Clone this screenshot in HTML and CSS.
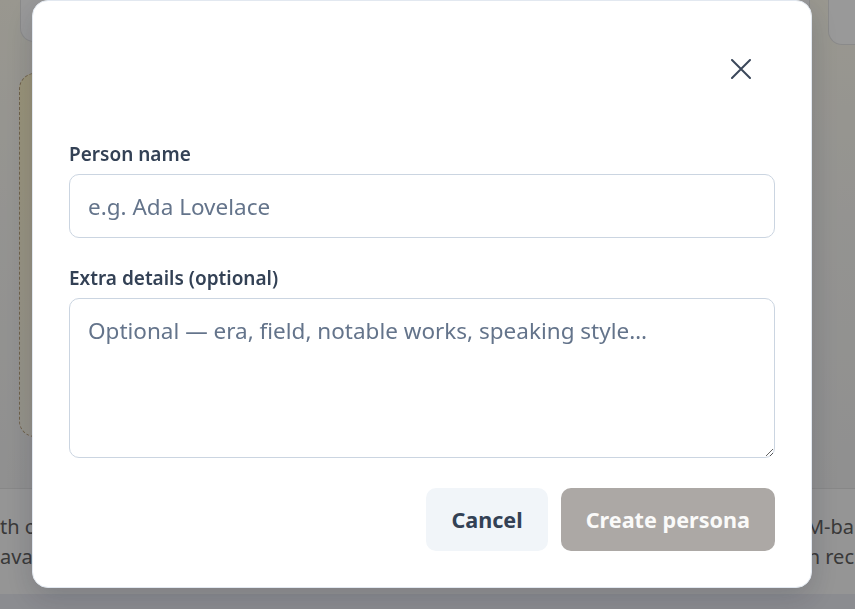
FILE: index.html
```html
<!DOCTYPE html>
<html lang="en">
<head>
<meta charset="utf-8">
<title>New persona</title>
<link rel="stylesheet" href="styles.css">
</head>
<body>
<div class="app">
  <div class="topbar">
    <div class="top-card top-card-left"></div>
    <div class="top-card top-card-right"></div>
  </div>
  <main class="main">
    <div class="drop-card"></div>
  </main>
  <footer class="footer">
    <p class="foot-text foot-left">th or<br>avai</p>
    <p class="foot-text foot-right">LLM-ba<br>own rec</p>
  </footer>
  <div class="bottom-band"></div>
</div>

<div class="overlay">
  <div class="modal" role="dialog" aria-label="Create persona">
    <div class="modal-head">
      <button class="close-btn" type="button" aria-label="Close">
        <svg width="20" height="20" viewBox="0 0 20 20" fill="none" stroke="currentColor" stroke-width="2" stroke-linecap="round"><path d="M1 1 L19 19 M19 1 L1 19"/></svg>
      </button>
    </div>
    <label class="field-label" for="pname">Person name</label>
    <input id="pname" class="field field-input" type="text" placeholder="e.g. Ada Lovelace">
    <label class="field-label" for="pdetails">Extra details (optional)</label>
    <textarea id="pdetails" class="field field-area" placeholder="Optional — era, field, notable works, speaking style…"></textarea>
    <div class="actions">
      <button class="btn btn-cancel" type="button">Cancel</button>
      <button class="btn btn-create" type="button" disabled>Create persona</button>
    </div>
  </div>
</div>
</body>
</html>
```

FILE: styles.css
```css
* { box-sizing: border-box; }

html, body {
  margin: 0;
  height: 609px;
  overflow: hidden;
}

body {
  font-family: "Noto Sans", "Open Sans", "Liberation Sans", sans-serif;
  background: #f8f8f8;
}

/* underlying page */
.app {
  height: 609px;
  display: flex;
  flex-direction: column;
  background: linear-gradient(180deg, #fffcef 0%, #f7f6f2 35%, #f0f0f0 80%, #ececec 100%);
}

.topbar {
  height: 45px;
  display: flex;
  align-items: flex-start;
  padding-left: 20px;
}

.top-card {
  background: #ffffff;
  border: 1px solid #e6e6e6;
  border-top: none;
}

.top-card-left {
  width: 790px;
  height: 42px;
  border-radius: 0 0 14px 14px;
}

.top-card-right {
  margin-left: auto;
  width: 27px;
  height: 45px;
  border-right: none;
  border-radius: 0 0 0 14px;
}

.main {
  flex: 1;
  padding: 28px 0 0 19px;
}

.drop-card {
  width: 420px;
  height: 364px;
  border: 1px dashed #b9a27c;
  border-radius: 16px;
  background: linear-gradient(180deg, #fff4c8 0%, #fbf5dc 60%, #f8f4e6 100%);
}

.footer {
  height: 106px;
  border-top: 1px solid #e2e2e2;
  background: #f8f8f8;
  display: flex;
  justify-content: space-between;
  padding-top: 23px;
}

.foot-text {
  margin: 0;
  font-size: 20px;
  line-height: 30px;
  color: #606060;
  white-space: nowrap;
}

.foot-left {
  padding-left: 0;
}

.foot-right {
  width: 90px;
  text-align: right;
  padding-right: 1px;
}

.bottom-band {
  height: 15px;
  background: #e8e9f0;
}

/* modal layer */
.overlay {
  position: fixed;
  inset: 0;
  background: rgba(0, 0, 0, 0.4);
  display: flex;
  align-items: flex-start;
  padding-left: 32px;
}

.modal {
  width: 780px;
  background: #ffffff;
  border: 1px solid #e2e8f0;
  border-radius: 16px;
  padding: 36px 36px 36px;
  box-shadow: 0 10px 30px rgba(15, 23, 42, 0.18);
  display: flex;
  flex-direction: column;
}

.modal-head {
  display: flex;
  justify-content: flex-end;
  margin-top: 10px;
  margin-bottom: 50px;
}

.close-btn {
  width: 44px;
  height: 44px;
  margin-right: 12px;
  padding: 0;
  border: none;
  background: transparent;
  color: #3b475a;
  display: flex;
  align-items: center;
  justify-content: center;
  cursor: pointer;
}

.field-label {
  display: block;
  font-size: 19px;
  line-height: 26px;
  font-weight: 600;
  color: #334155;
  margin-bottom: 7px;
}

.field {
  width: 100%;
  border: 1px solid #cbd5e1;
  border-radius: 10px;
  font-family: inherit;
  font-size: 22.5px;
  color: #1e293b;
  background: #ffffff;
  outline: none;
}

.field::placeholder {
  color: #64748b;
  opacity: 1;
}

.field-input {
  height: 64px;
  padding: 0 18px;
  margin-bottom: 27px;
}

.field-area {
  height: 160px;
  padding: 17px 18px;
  line-height: 30px;
  resize: vertical;
  display: block;
}

.actions {
  display: flex;
  justify-content: flex-end;
  gap: 13px;
  margin-top: 30px;
}

.btn {
  height: 63px;
  padding: 0 25px;
  border: none;
  border-radius: 10px;
  font-family: inherit;
  font-size: 21.6px;
  font-weight: 700;
  cursor: pointer;
}

.btn-cancel {
  background: #f1f5f9;
  color: #334155;
}

.btn-create {
  background: #aca8a5;
  color: #fafaf9;
  cursor: default;
}
```
